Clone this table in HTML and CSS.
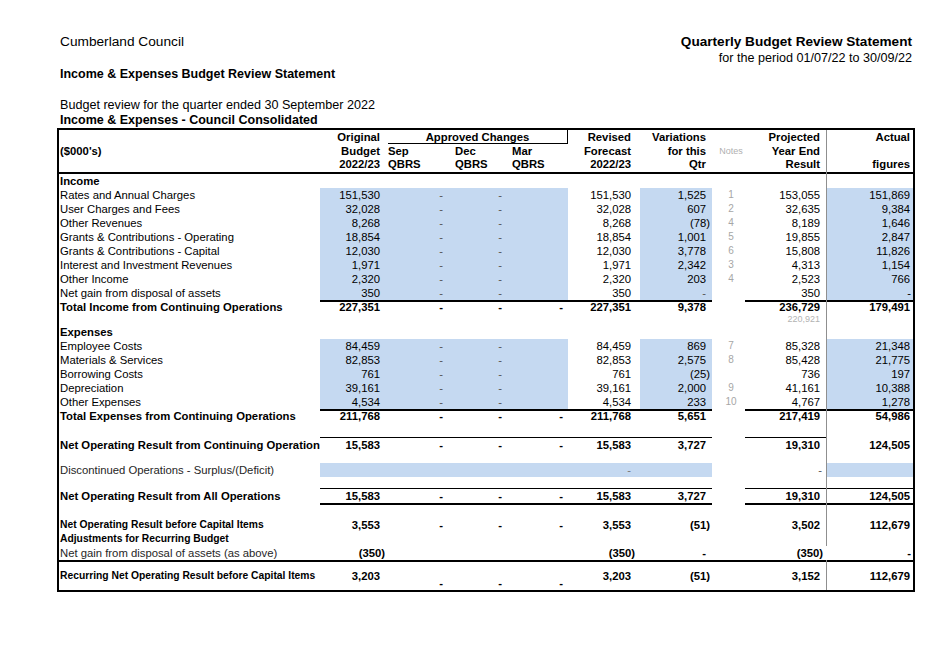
FILE: index.html
```html
<!DOCTYPE html>
<html lang="en">
<head>
<meta charset="utf-8">
<title>Quarterly Budget Review Statement</title>
<link rel="stylesheet" href="styles.css">
</head>
<body>
<div class="page">
  <header class="doc-head">
    <div class="row-top">
      <span class="org">Cumberland Council</span>
      <span class="title">Quarterly Budget Review Statement</span>
    </div>
    <div class="period">for the period 01/07/22 to 30/09/22</div>
    <div class="subtitle">Income &amp; Expenses Budget Review Statement</div>
    <div class="review">Budget review for the quarter ended 30 September 2022</div>
    <div class="section">Income &amp; Expenses - Council Consolidated</div>
  </header>

  <table class="qbrs">
    <colgroup>
      <col class="w-lbl"><col class="w-o"><col class="w-s"><col class="w-d"><col class="w-m">
      <col class="w-r"><col class="w-v"><col class="w-n"><col class="w-p"><col class="w-a">
    </colgroup>
    <tbody>
      <tr class="h14 head">
        <td class="lbl"></td>
        <td class="o">Original</td>
        <td class="appr" colspan="3"><div class="appr-box">Approved Changes</div></td>
        <td class="r">Revised</td>
        <td class="v">Variations</td>
        <td class="n"></td>
        <td class="p">Projected</td>
        <td class="a">Actual</td>
      </tr>
      <tr class="h14 head">
        <td class="lbl">($000's)</td>
        <td class="o">Budget</td>
        <td class="s hl">Sep</td>
        <td class="d hl">Dec</td>
        <td class="m hl">Mar</td>
        <td class="r">Forecast</td>
        <td class="v">for this</td>
        <td class="n notes">Notes</td>
        <td class="p">Year End</td>
        <td class="a"></td>
      </tr>
      <tr class="h16 head hb">
        <td class="lbl"></td>
        <td class="o">2022/23</td>
        <td class="s hl">QBRS</td>
        <td class="d hl">QBRS</td>
        <td class="m hl">QBRS</td>
        <td class="r">2022/23</td>
        <td class="v">Qtr</td>
        <td class="n"></td>
        <td class="p">Result</td>
        <td class="a">figures</td>
      </tr>

      <tr class="h14"><td class="lbl b">Income</td><td class="o"></td><td class="s"></td><td class="d"></td><td class="m"></td><td class="r"></td><td class="v"></td><td class="n"></td><td class="p"></td><td class="a"></td></tr>
      <tr class="h14"><td class="lbl">Rates and Annual Charges</td><td class="o bl">151,530</td><td class="s bl dash">-</td><td class="d bl dash">-</td><td class="m bl"></td><td class="r">151,530</td><td class="v bl">1,525</td><td class="n">1</td><td class="p">153,055</td><td class="a bl">151,869</td></tr>
      <tr class="h14"><td class="lbl">User Charges and Fees</td><td class="o bl">32,028</td><td class="s bl dash">-</td><td class="d bl dash">-</td><td class="m bl"></td><td class="r">32,028</td><td class="v bl">607</td><td class="n">2</td><td class="p">32,635</td><td class="a bl">9,384</td></tr>
      <tr class="h14"><td class="lbl">Other Revenues</td><td class="o bl">8,268</td><td class="s bl dash">-</td><td class="d bl dash">-</td><td class="m bl"></td><td class="r">8,268</td><td class="v bl neg">(78)</td><td class="n">4</td><td class="p">8,189</td><td class="a bl">1,646</td></tr>
      <tr class="h14"><td class="lbl">Grants &amp; Contributions - Operating</td><td class="o bl">18,854</td><td class="s bl dash">-</td><td class="d bl dash">-</td><td class="m bl"></td><td class="r">18,854</td><td class="v bl">1,001</td><td class="n">5</td><td class="p">19,855</td><td class="a bl">2,847</td></tr>
      <tr class="h14"><td class="lbl">Grants &amp; Contributions - Capital</td><td class="o bl">12,030</td><td class="s bl dash">-</td><td class="d bl dash">-</td><td class="m bl"></td><td class="r">12,030</td><td class="v bl">3,778</td><td class="n">6</td><td class="p">15,808</td><td class="a bl">11,826</td></tr>
      <tr class="h14"><td class="lbl">Interest and Investment Revenues</td><td class="o bl">1,971</td><td class="s bl dash">-</td><td class="d bl dash">-</td><td class="m bl"></td><td class="r">1,971</td><td class="v bl">2,342</td><td class="n">3</td><td class="p">4,313</td><td class="a bl">1,154</td></tr>
      <tr class="h14"><td class="lbl">Other Income</td><td class="o bl">2,320</td><td class="s bl dash">-</td><td class="d bl dash">-</td><td class="m bl"></td><td class="r">2,320</td><td class="v bl">203</td><td class="n">4</td><td class="p">2,523</td><td class="a bl">766</td></tr>
      <tr class="h14"><td class="lbl">Net gain from disposal of assets</td><td class="o bl">350</td><td class="s bl dash">-</td><td class="d bl dash">-</td><td class="m bl"></td><td class="r">350</td><td class="v bl dash">-</td><td class="n"></td><td class="p">350</td><td class="a bl dash-a">-</td></tr>
      <tr class="h14 tot"><td class="lbl">Total Income from Continuing Operations</td><td class="o t2">227,351</td><td class="s t2">-</td><td class="d t2">-</td><td class="m t2">-</td><td class="r t2">227,351</td><td class="v t2">9,378</td><td class="n"></td><td class="p t2">236,729</td><td class="a t2">179,491</td></tr>
      <tr class="h12"><td class="lbl"></td><td class="o"></td><td class="s"></td><td class="d"></td><td class="m"></td><td class="r"></td><td class="v"></td><td class="n"></td><td class="p memo">220,921</td><td class="a"></td></tr>

      <tr class="h13"><td class="lbl b">Expenses</td><td class="o"></td><td class="s"></td><td class="d"></td><td class="m"></td><td class="r"></td><td class="v"></td><td class="n"></td><td class="p"></td><td class="a"></td></tr>
      <tr class="h14"><td class="lbl">Employee Costs</td><td class="o bl">84,459</td><td class="s bl dash">-</td><td class="d bl dash">-</td><td class="m bl"></td><td class="r">84,459</td><td class="v bl">869</td><td class="n">7</td><td class="p">85,328</td><td class="a bl">21,348</td></tr>
      <tr class="h14"><td class="lbl">Materials &amp; Services</td><td class="o bl">82,853</td><td class="s bl dash">-</td><td class="d bl dash">-</td><td class="m bl"></td><td class="r">82,853</td><td class="v bl">2,575</td><td class="n">8</td><td class="p">85,428</td><td class="a bl">21,775</td></tr>
      <tr class="h14"><td class="lbl">Borrowing Costs</td><td class="o bl">761</td><td class="s bl dash">-</td><td class="d bl dash">-</td><td class="m bl"></td><td class="r">761</td><td class="v bl neg">(25)</td><td class="n"></td><td class="p">736</td><td class="a bl">197</td></tr>
      <tr class="h14"><td class="lbl">Depreciation</td><td class="o bl">39,161</td><td class="s bl dash">-</td><td class="d bl dash">-</td><td class="m bl"></td><td class="r">39,161</td><td class="v bl">2,000</td><td class="n">9</td><td class="p">41,161</td><td class="a bl">10,388</td></tr>
      <tr class="h14"><td class="lbl">Other Expenses</td><td class="o bl">4,534</td><td class="s bl dash">-</td><td class="d bl dash">-</td><td class="m bl"></td><td class="r">4,534</td><td class="v bl">233</td><td class="n">10</td><td class="p">4,767</td><td class="a bl">1,278</td></tr>
      <tr class="h14 tot"><td class="lbl">Total Expenses from Continuing Operations</td><td class="o t2">211,768</td><td class="s t2">-</td><td class="d t2">-</td><td class="m t2">-</td><td class="r t2">211,768</td><td class="v t2">5,651</td><td class="n"></td><td class="p t2">217,419</td><td class="a t2">54,986</td></tr>

      <tr class="h14"><td class="lbl"></td><td class="o"></td><td class="s"></td><td class="d"></td><td class="m"></td><td class="r"></td><td class="v"></td><td class="n"></td><td class="p"></td><td class="a"></td></tr>
      <tr class="h15 tot"><td class="lbl">Net Operating Result from Continuing Operation</td><td class="o t1">15,583</td><td class="s t1">-</td><td class="d t1">-</td><td class="m t1">-</td><td class="r t1">15,583</td><td class="v t1">3,727</td><td class="n"></td><td class="p t1">19,310</td><td class="a">124,505</td></tr>
      <tr class="h11"><td class="lbl"></td><td class="o"></td><td class="s"></td><td class="d"></td><td class="m"></td><td class="r"></td><td class="v"></td><td class="n"></td><td class="p"></td><td class="a"></td></tr>
      <tr class="h14"><td class="lbl muted">Discontinued Operations - Surplus/(Deficit)</td><td class="o bl"></td><td class="s bl"></td><td class="d bl"></td><td class="m bl"></td><td class="r bl dash-r">-</td><td class="v bl"></td><td class="n"></td><td class="p dash-p">-</td><td class="a bl"></td></tr>
      <tr class="h11"><td class="lbl"></td><td class="o"></td><td class="s"></td><td class="d"></td><td class="m"></td><td class="r"></td><td class="v"></td><td class="n"></td><td class="p"></td><td class="a"></td></tr>
      <tr class="h17 tot top"><td class="lbl">Net Operating Result from All Operations</td><td class="o t1 b2">15,583</td><td class="s t1 b2">-</td><td class="d t1 b2">-</td><td class="m t1 b2">-</td><td class="r t1 b2">15,583</td><td class="v t1 b2">3,727</td><td class="n"></td><td class="p t1 b2">19,310</td><td class="a t1 b2">124,505</td></tr>
      <tr class="h13"><td class="lbl"></td><td class="o"></td><td class="s"></td><td class="d"></td><td class="m"></td><td class="r"></td><td class="v"></td><td class="n"></td><td class="p"></td><td class="a"></td></tr>

      <tr class="h14 tot low"><td class="lbl sm">Net Operating Result before Capital Items</td><td class="o">3,553</td><td class="s">-</td><td class="d">-</td><td class="m">-</td><td class="r">3,553</td><td class="v neg">(51)</td><td class="n"></td><td class="p">3,502</td><td class="a">112,679</td></tr>
      <tr class="h14 tot low"><td class="lbl sm">Adjustments for Recurring Budget</td><td class="o"></td><td class="s"></td><td class="d"></td><td class="m"></td><td class="r"></td><td class="v"></td><td class="n"></td><td class="p"></td><td class="a"></td></tr>
      <tr class="h14 low"><td class="lbl muted">Net gain from disposal of assets (as above)</td><td class="o b neg">(350)</td><td class="s"></td><td class="d"></td><td class="m"></td><td class="r b neg">(350)</td><td class="v b">-</td><td class="n"></td><td class="p b neg">(350)</td><td class="a b dash-a nov">-</td></tr>
      <tr class="h29 tot low last"><td class="lbl sm t2">Recurring Net Operating Result before Capital Items</td><td class="o t2">3,203</td><td class="s t2 drop">-</td><td class="d t2 drop">-</td><td class="m t2 drop">-</td><td class="r t2">3,203</td><td class="v t2 neg">(51)</td><td class="n t2"></td><td class="p t2">3,152</td><td class="a t2">112,679</td></tr>
    </tbody>
  </table>
</div>
</body>
</html>
```

FILE: styles.css
```css
html, body {
  margin: 0;
  padding: 0;
  background: #fff;
}

body {
  font-family: "Liberation Sans", Arial, sans-serif;
  color: #000;
}

.page {
  width: 858px;
  padding-left: 57px;
}

/* ---------- document heading ---------- */
.doc-head {
  padding-top: 34px;
}

.row-top {
  display: flex;
  justify-content: space-between;
  align-items: center;
  height: 16px;
  line-height: 16px;
}

.org {
  font-size: 13.7px;
  padding-left: 3px;
}

.title {
  font-size: 13.6px;
  font-weight: bold;
  padding-right: 3px;
}

.period {
  height: 16px;
  line-height: 16px;
  font-size: 12.6px;
  text-align: right;
  padding-right: 3px;
}

.subtitle {
  height: 16px;
  line-height: 16px;
  font-size: 12.5px;
  font-weight: bold;
  padding-left: 3px;
}

.review {
  margin-top: 16px;
  height: 15px;
  line-height: 15px;
  font-size: 12.6px;
  padding-left: 3px;
}

.section {
  height: 15px;
  line-height: 15px;
  font-size: 12.5px;
  font-weight: bold;
  padding-left: 3px;
}

/* ---------- table ---------- */
.qbrs {
  margin-top: 0;
  width: 858px;
  table-layout: fixed;
  border-collapse: separate;
  border-spacing: 0;
  border: 2px solid #000;
  font-size: 11.3px;
}

.w-lbl { width: 261px; }
.w-o { width: 65px; }
.w-s { width: 67px; }
.w-d { width: 57px; }
.w-m { width: 59px; }
.w-r { width: 72px; }
.w-v { width: 72px; }
.w-n { width: 33px; }
.w-p { width: 81px; }
.w-a { width: 87px; }

.qbrs td {
  padding: 0;
  white-space: nowrap;
  overflow: hidden;
  text-align: right;
  vertical-align: middle;
  line-height: 14px;
  box-shadow: var(--vl, 0 0 #0000), var(--tl, 0 0 #0000), var(--btl, 0 0 #0000);
}

.h11 { height: 11px; }
.h12 { height: 12px; }
.h13 { height: 13px; }
.h14 { height: 14px; }
.h15 { height: 15px; }
.h16 { height: 16px; }
.h17 { height: 17px; }
.h29 { height: 29px; }

.qbrs .h11 td { line-height: 11px; }
.qbrs .h12 td { line-height: 12px; }
.qbrs .h13 td { line-height: 13px; }

/* columns */
.qbrs td.lbl { text-align: left; padding-left: 1px; }
.qbrs td.o { padding-right: 5px; }
.qbrs td.s { padding-right: 9px; }
.qbrs td.d { padding-right: 7px; }
.qbrs td.m { padding-right: 5px; }
.qbrs td.r { padding-right: 9px; }
.qbrs td.v { padding-right: 6px; }
.qbrs td.n { text-align: center; padding-left: 5px; color: #a6a6a6; font-size: 10px; }
.qbrs td.p { padding-right: 6px; }
.qbrs td.a { padding-right: 3px; --vl: inset 1px 0 0 #8f8f8f; }
.qbrs td.a.nov { --vl: 0 0 #0000; }

.qbrs td.neg { padding-right: 2px; }
.qbrs td.o.neg { padding-right: 0; }
.qbrs td.r.neg { padding-right: 5px; }
.qbrs td.p.neg { padding-right: 3px; }
.qbrs td.dash-a { padding-right: 2px; }
.qbrs td.dash-r { padding-right: 9px; color: #777; }
.qbrs td.dash-p { padding-right: 4px; color: #555; }

.qbrs td.hl { text-align: left; padding-left: 3px; padding-right: 0; }

.head td { font-weight: bold; }
.head td.notes { font-weight: normal; font-size: 9px; color: #b0b0b0; text-align: center; }
.hb td { --btl: inset 0 -2px 0 #000; line-height: 13px; vertical-align: top; }

.qbrs td.appr { padding: 0; text-align: center; vertical-align: top; }
.appr-box {
  margin-left: 3px;
  height: 13px;
  line-height: 14px;
  border-right: 1px solid #000;
  border-bottom: 1px solid #000;
}

.bl { background: #c5d9f1; }
.b { font-weight: bold; }
.dash { color: #555; }
.tot td { font-weight: bold; }
.muted { color: #262626; }

.qbrs td.memo {
  font-size: 9px;
  color: #b3b3b3;
  line-height: 10px;
  padding-right: 6px;
  vertical-align: top;
}

.t1 { --tl: inset 0 1px 0 #000; }
.t2 { --tl: inset 0 2px 0 #000; }
.b2 { --btl: inset 0 -2px 0 #000; }

.top td { vertical-align: top; padding-top: 1px; }

.low td.sm { font-size: 10.3px; }
.last td { vertical-align: top; padding-top: 9px; }
.qbrs .last td.drop { padding-top: 16px; }
```
